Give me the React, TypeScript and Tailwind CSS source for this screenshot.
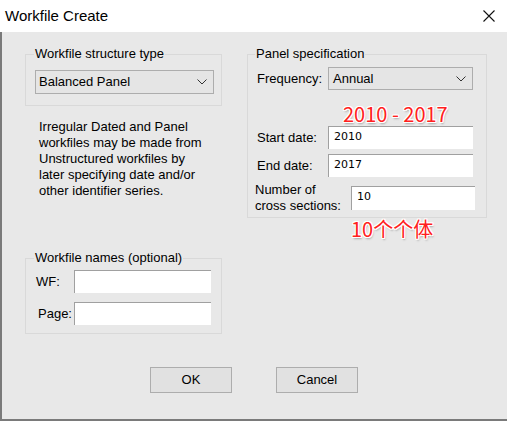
import React from 'react';

const font = "font-['Liberation_Sans',Arial,sans-serif]";
const redText =
  "font-['Noto_Sans_CJK_SC',sans-serif] font-normal text-[20px] leading-[24px] text-[#ff2020] whitespace-nowrap [text-shadow:_-1px_-1px_0_#fff,_1px_-1px_0_#fff,_-1px_1px_0_#fff,_1px_1px_0_#fff,_0_-1px_0_#fff,_0_1px_0_#fff,_-1px_0_0_#fff,_1px_0_0_#fff,_1px_2px_2px_#a0a0a0]";

const Chevron = () => (
  <svg width="10" height="6" viewBox="0 0 10 6" className="shrink-0">
    <path d="M0.5 0.5 L5 5 L9.5 0.5" fill="none" stroke="#333" strokeWidth="1" />
  </svg>
);

const Combo: React.FC<{ value: string; className: string }> = ({ value, className }) => (
  <div
    className={`flex items-center justify-between bg-[#e5e5e5] border border-[#adadad] pl-[3px] pr-[6px] text-[13px] text-black ${className}`}
  >
    <span>{value}</span>
    <Chevron />
  </div>
);

const TextBox: React.FC<{ value?: string; className: string }> = ({ value, className }) => (
  <div
    className={`bg-white border-t border-l border-[#a0a0a0] border-r-white border-b-white pl-[5px] pt-[3px] font-['DejaVu_Sans',sans-serif] text-[11px] leading-[14px] text-black ${className}`}
  >
    {value}
  </div>
);

const GroupLabel: React.FC<{ children: React.ReactNode; className?: string }> = ({ children, className = '' }) => (
  <div className={`-mt-[9px] w-fit bg-[#e8e8e8] px-[1px] leading-[16px] ${className}`}>{children}</div>
);

const App: React.FC = () => {
  return (
    <div className={`w-[507px] h-[421px] flex flex-col bg-[#e8e8e8] text-[13px] text-black ${font}`}>
      {/* Title bar */}
      <div className="h-[32px] shrink-0 bg-white flex items-center justify-between pl-[5px] pr-[12px]">
        <span className="text-[15px] leading-[20px] text-black">Workfile Create</span>
        <svg width="12" height="12" viewBox="0 0 12 12">
          <path d="M0.5 0.5 L11.5 11.5 M11.5 0.5 L0.5 11.5" stroke="#111" strokeWidth="1.1" />
        </svg>
      </div>

      {/* Body */}
      <div className="flex-1 flex flex-col border-l-2 border-b-2 border-[#7a7a7a]">
        <div className="flex items-start">
          {/* Left column */}
          <div className="ml-[23px] w-[197px] flex flex-col">
            <div className="mt-[22px] h-[52px] border border-[#d9d9d9] flex flex-col">
              <GroupLabel className="ml-[8px]">Workfile structure type</GroupLabel>
              <Combo value="Balanced Panel" className="mt-[8px] ml-[9px] w-[179px] h-[24px]" />
            </div>

            <p className="mt-[13px] ml-[14px] leading-[16px] whitespace-nowrap">
              Irregular Dated and Panel
              <br />
              workfiles may be made from
              <br />
              Unstructured workfiles by
              <br />
              later specifying date and/or
              <br />
              other identifier series.
            </p>

            <div className="mt-[59px] h-[76px] border border-[#d9d9d9] flex flex-col">
              <GroupLabel className="ml-[8px]">Workfile names (optional)</GroupLabel>
              <div className="mt-[4px] flex items-center">
                <span className="ml-[10px] w-[38px]">WF:</span>
                <TextBox className="w-[137px] h-[23px]" />
              </div>
              <div className="mt-[9px] flex items-center">
                <span className="ml-[12px] w-[36px]">Page:</span>
                <TextBox className="w-[137px] h-[23px]" />
              </div>
            </div>
          </div>

          {/* Right column */}
          <div className="ml-[25px] w-[240px] flex flex-col">
            <div className="mt-[22px] h-[164px] border border-[#d9d9d9] flex flex-col">
              <GroupLabel className="ml-[7px]">Panel specification</GroupLabel>
              <div className="mt-[5px] flex items-center">
                <span className="ml-[9px] w-[71px]">Frequency:</span>
                <Combo value="Annual" className="w-[145px] h-[23px] pl-[4px]" />
              </div>
              <div className={`mt-[12px] ml-[95px] ${redText}`}>2010 - 2017</div>
              <div className="flex items-center">
                <span className="ml-[9px] w-[71px]">Start date:</span>
                <TextBox value="2010" className="w-[145px] h-[23px]" />
              </div>
              <div className="mt-[5px] flex items-center">
                <span className="ml-[9px] w-[71px]">End date:</span>
                <TextBox value="2017" className="w-[145px] h-[23px]" />
              </div>
              <div className="mt-[5px] flex items-center">
                <span className="ml-[7px] w-[96px] leading-[16px]">
                  Number of
                  <br />
                  cross sections:
                </span>
                <TextBox value="10" className="w-[124px] h-[24px]" />
              </div>
            </div>
            <div className={`-mt-[1px] ml-[104px] ${redText}`}>10个个体</div>
          </div>
        </div>

        {/* Buttons */}
        <div className="mt-[33px] ml-[148px] flex gap-[44px]">
          <button className="w-[82px] h-[26px] bg-[#e1e1e1] border border-[#adadad] text-[13px] text-black">
            OK
          </button>
          <button className="w-[82px] h-[26px] bg-[#e1e1e1] border border-[#adadad] text-[13px] text-black">
            Cancel
          </button>
        </div>
      </div>
    </div>
  );
};

export default App;
